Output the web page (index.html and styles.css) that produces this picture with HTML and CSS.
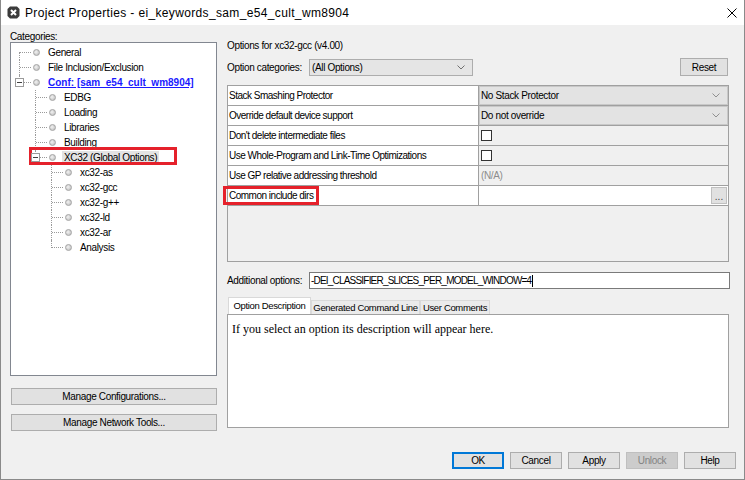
FILE: index.html
```html
<!DOCTYPE html>
<html lang="en">
  <head>
    <meta charset="UTF-8" />
    <title>Project Properties</title>
    <link rel="stylesheet" href="styles.css">
  </head>
  <body>
    <div class="window">
      <div class="titlebar">
        <svg class="app-icon" width="13" height="13" viewBox="0 0 13 13">
          <path d="M3 0.5h7l2.5 2.5v7l-2.5 2.5h-7l-2.5-2.5v-7z" fill="#3b3b3b" />
          <path d="M4 4l5 5M9 4l-5 5" stroke="#fff" stroke-width="2" />
        </svg>
        <span class="title">Project Properties - ei_keywords_sam_e54_cult_wm8904</span>
        <svg class="close" width="10" height="10" viewBox="0 0 10 10">
          <path d="M0.5 0.5l9 9M9.5 0.5l-9 9" stroke="#000" stroke-width="1" />
        </svg>
      </div>

      <div class="main">
        <div class="left">
          <div class="caption">Categories:</div>
          <div class="tree-box">
            <ul class="tree">
              <li><div class="row"><span class="dot"></span><span class="label">General</span></div></li>
              <li><div class="row"><span class="dot"></span><span class="label">File Inclusion/Exclusion</span></div></li>
              <li>
                <div class="row"><span class="toggle"></span><span class="dot"></span><span class="label conf">Conf: [sam_e54_cult_wm8904]</span></div>
                <ul>
                  <li><div class="row"><span class="dot"></span><span class="label">EDBG</span></div></li>
                  <li><div class="row"><span class="dot"></span><span class="label">Loading</span></div></li>
                  <li><div class="row"><span class="dot"></span><span class="label">Libraries</span></div></li>
                  <li><div class="row"><span class="dot"></span><span class="label">Building</span></div></li>
                  <li>
                    <div class="row">
                      <span class="toggle"></span><span class="dot"></span><span class="label selected">XC32 (Global Options)</span>
                      <span class="mark tree-mark"></span>
                    </div>
                    <ul>
                      <li><div class="row"><span class="dot"></span><span class="label">xc32-as</span></div></li>
                      <li><div class="row"><span class="dot"></span><span class="label">xc32-gcc</span></div></li>
                      <li><div class="row"><span class="dot"></span><span class="label">xc32-g++</span></div></li>
                      <li><div class="row"><span class="dot"></span><span class="label">xc32-ld</span></div></li>
                      <li><div class="row"><span class="dot"></span><span class="label">xc32-ar</span></div></li>
                      <li><div class="row"><span class="dot"></span><span class="label">Analysis</span></div></li>
                    </ul>
                  </li>
                </ul>
              </li>
            </ul>
          </div>
          <button class="side-button first">Manage Configurations...</button>
          <button class="side-button">Manage Network Tools...</button>
        </div>

        <div class="right">
          <div class="options-for">Options for xc32-gcc (v4.00)</div>
          <div class="cat-row">
            <span class="field-label">Option categories:</span>
            <div class="combo">
              <span>(All Options)</span>
              <svg class="chevron" width="8" height="5" viewBox="0 0 8 5"><polyline points="0.5,0.5 4,4 7.5,0.5" fill="none" stroke="#707070" /></svg>
            </div>
            <button class="reset">Reset</button>
          </div>

          <div class="prop-pane">
            <div class="prop-row">
              <div class="prop-name">Stack Smashing Protector</div>
              <div class="prop-value combo-cell">
                <span>No Stack Protector</span>
                <svg class="chevron" width="8" height="5" viewBox="0 0 8 5"><polyline points="0.5,0.5 4,4 7.5,0.5" fill="none" stroke="#909090" /></svg>
              </div>
            </div>
            <div class="prop-row">
              <div class="prop-name">Override default device support</div>
              <div class="prop-value combo-cell">
                <span>Do not override</span>
                <svg class="chevron" width="8" height="5" viewBox="0 0 8 5"><polyline points="0.5,0.5 4,4 7.5,0.5" fill="none" stroke="#909090" /></svg>
              </div>
            </div>
            <div class="prop-row">
              <div class="prop-name">Don't delete intermediate files</div>
              <div class="prop-value"><span class="checkbox"></span></div>
            </div>
            <div class="prop-row">
              <div class="prop-name">Use Whole-Program and Link-Time Optimizations</div>
              <div class="prop-value"><span class="checkbox"></span></div>
            </div>
            <div class="prop-row">
              <div class="prop-name">Use GP relative addressing threshold</div>
              <div class="prop-value na">(N/A)</div>
            </div>
            <div class="prop-row">
              <div class="prop-name">Common include dirs<span class="mark dirs-mark"></span></div>
              <div class="prop-value text-cell"><span class="dots">...</span></div>
            </div>
          </div>

          <div class="add-row">
            <span class="field-label">Additional options:</span>
            <div class="text-field">-DEI_CLASSIFIER_SLICES_PER_MODEL_WINDOW=4<span class="caret"></span></div>
          </div>

          <div class="tabs">
            <div class="tab active">Option Description</div>
            <div class="tab">Generated Command Line</div>
            <div class="tab">User Comments</div>
          </div>
          <div class="tab-body">If you select an option its description will appear here.</div>
        </div>
      </div>

      <div class="footer">
        <button class="dlg-button default">OK</button>
        <button class="dlg-button">Cancel</button>
        <button class="dlg-button">Apply</button>
        <button class="dlg-button" disabled>Unlock</button>
        <button class="dlg-button">Help</button>
      </div>
    </div>
  </body>
</html>
```

FILE: styles.css
```css
body {
  margin: 0;
  background: #fff;
  font-family: "Liberation Sans", Arial, sans-serif;
  font-size: 10px;
  letter-spacing: -0.35px;
  color: #000;
}

button {
  font-family: inherit;
  font-size: 10px;
  letter-spacing: inherit;
  color: #000;
  background: #e1e1e1;
  border: 1px solid #adadad;
  padding: 0;
  box-sizing: border-box;
}

.window {
  width: 745px;
  height: 480px;
  box-sizing: border-box;
  border: 1px solid #8a8a8a;
  border-top: none;
  background: #f0f0f0;
  display: flex;
  flex-direction: column;
}

/* title bar */
.titlebar {
  height: 25px;
  flex: none;
  background: #fff;
  display: flex;
  align-items: center;
  padding-left: 6px;
}

.title {
  margin-left: 5px;
  font-size: 12px;
  letter-spacing: 0.35px;
}

.close {
  margin-left: auto;
  margin-right: 7px;
}

.main {
  display: flex;
  height: 427px;
  flex: none;
}

/* left side */
.left {
  width: 207px;
  margin-left: 9px;
  padding-top: 6px;
  display: flex;
  flex-direction: column;
}

.caption {
  height: 11px;
  line-height: 11px;
}

.tree-box {
  height: 334px;
  box-sizing: border-box;
  border: 1px solid #828790;
  background: #fff;
  padding-top: 2px;
}

.tree,
.tree ul {
  list-style: none;
  margin: 0;
  padding: 0;
}

.tree ul {
  margin-left: 16px;
}

.tree li {
  position: relative;
}

.tree li::before {
  content: "";
  position: absolute;
  left: 8px;
  top: 0;
  bottom: 0;
  border-left: 1px dotted #9a9a9a;
}

.tree > li:first-child::before {
  top: 7px;
}

.tree li:last-child::before {
  bottom: auto;
  height: 8px;
}

.tree .row {
  position: relative;
  height: 15px;
  display: flex;
  align-items: center;
  padding-left: 22px;
}

.tree .row::before {
  content: "";
  position: absolute;
  left: 9px;
  top: 7px;
  width: 11px;
  border-top: 1px dotted #9a9a9a;
}

.toggle {
  position: absolute;
  left: 4px;
  top: 3px;
  width: 9px;
  height: 9px;
  box-sizing: border-box;
  border: 1px solid #9a9a9a;
  background: #fff;
  z-index: 1;
}

.toggle::after {
  content: "";
  position: absolute;
  left: 1px;
  top: 3px;
  width: 5px;
  border-top: 1px solid #404040;
}

.dot {
  width: 7px;
  height: 7px;
  border-radius: 50%;
  box-sizing: border-box;
  border: 1px solid #a4a4a4;
  background: radial-gradient(circle at 40% 40%, #f2f2f2, #b8b8b8);
  margin-right: 8px;
  flex: none;
}

.label {
  white-space: nowrap;
}

.label.conf {
  font-weight: bold;
  color: #1a1aff;
  text-decoration: underline;
  letter-spacing: 0;
}

.label.selected {
  background: #e3e3e3;
  padding: 0 2px;
  margin-left: -2px;
  line-height: 14px;
}

.mark {
  position: absolute;
  box-sizing: border-box;
  border: 3px solid #e5212b;
}

.tree-mark {
  left: 2px;
  top: -3px;
  width: 148px;
  height: 18px;
}

.side-button {
  height: 17px;
  margin-left: 1px;
  width: 206px;
  margin-top: 9px;
}

.side-button.first {
  margin-top: 12px;
}

/* right side */
.right {
  width: 503px;
  margin-left: 10px;
  padding-top: 15px;
  display: flex;
  flex-direction: column;
}

.options-for {
  line-height: 12px;
}

.cat-row,
.add-row {
  display: flex;
  align-items: center;
}

.cat-row {
  margin-top: 6px;
  height: 18px;
}

.field-label {
  width: 82px;
  flex: none;
}

.combo {
  width: 164px;
  height: 17px;
  box-sizing: border-box;
  border: 1px solid #adadad;
  background: #e5e5e5;
  display: flex;
  align-items: center;
  padding: 0 7px 0 2px;
}

.chevron {
  margin-left: auto;
}

.reset {
  margin-left: auto;
  margin-right: 2px;
  width: 48px;
  height: 18px;
}

.prop-pane {
  margin-top: 9px;
  width: 502px;
  height: 177px;
  box-sizing: border-box;
  border: 1px solid #a0a0a0;
  background: #f0f0f0;
}

.prop-row {
  display: grid;
  grid-template-columns: 251px 1fr;
  height: 20px;
  box-sizing: border-box;
  border-bottom: 1px solid #a0a0a0;
}

.prop-name {
  position: relative;
  background: #fff;
  border-right: 1px solid #a0a0a0;
  padding-left: 1px;
  line-height: 19px;
  white-space: nowrap;
  letter-spacing: -0.5px;
}

.prop-value {
  display: flex;
  align-items: center;
  padding-left: 2px;
  background: #f0f0f0;
}

.combo-cell {
  background: #e3e3e3;
  box-shadow: inset 0 0 0 1px #c8c8c8;
  padding-right: 8px;
}

.checkbox {
  width: 11px;
  height: 11px;
  box-sizing: border-box;
  border: 1px solid #333;
  background: #fff;
}

.na {
  color: #8c8c8c;
}

.text-cell {
  background: #fff;
  justify-content: flex-end;
  padding: 0 1px 0 0;
}

.dots {
  width: 16px;
  height: 17px;
  box-sizing: border-box;
  background: #e1e1e1;
  border: 1px solid #c0c0c0;
  text-align: center;
  line-height: 17px;
  color: #444;
  letter-spacing: 0;
}

.dirs-mark {
  left: -5px;
  top: 0;
  width: 96px;
  height: 19px;
}

.add-row {
  margin-top: 10px;
  height: 17px;
}

.text-field {
  width: 421px;
  height: 17px;
  box-sizing: border-box;
  border: 1px solid #7a7a7a;
  background: #fff;
  display: flex;
  align-items: center;
  padding-left: 1px;
  letter-spacing: -0.8px;
}

.caret {
  width: 1px;
  height: 12px;
  background: #000;
  margin-left: 1px;
}

.tabs {
  margin-top: 8px;
  height: 17px;
  display: flex;
  align-items: flex-end;
  padding-left: 1px;
}

.tab {
  height: 14px;
  line-height: 14px;
  box-sizing: border-box;
  background: #ebebeb;
  border: 1px solid #d9d9d9;
  border-bottom: none;
  white-space: nowrap;
  text-align: center;
  font-size: 9.5px;
  overflow: hidden;
}

.tab.active {
  width: 83px;
  height: 17px;
  line-height: 16px;
  background: #fff;
}

.tab:nth-child(2) {
  width: 109px;
}

.tab:nth-child(3) {
  width: 70px;
}

.tab-body {
  width: 502px;
  height: 114px;
  box-sizing: border-box;
  border: 1px solid #a0a0a0;
  background: #fff;
  padding: 7px 0 0 4px;
  font-family: "Liberation Serif", "Times New Roman", serif;
  font-size: 12px;
  letter-spacing: 0;
}

/* dialog buttons */
.footer {
  display: flex;
  justify-content: flex-end;
  gap: 6px;
  padding-right: 8px;
}

.dlg-button {
  width: 52px;
  height: 17px;
}

.dlg-button.default {
  border: 1px solid #0078d7;
  box-shadow: inset 0 0 0 1px #0078d7;
}

.dlg-button:disabled {
  background: #cccccc;
  border-color: #bfbfbf;
  color: #838383;
}
```
